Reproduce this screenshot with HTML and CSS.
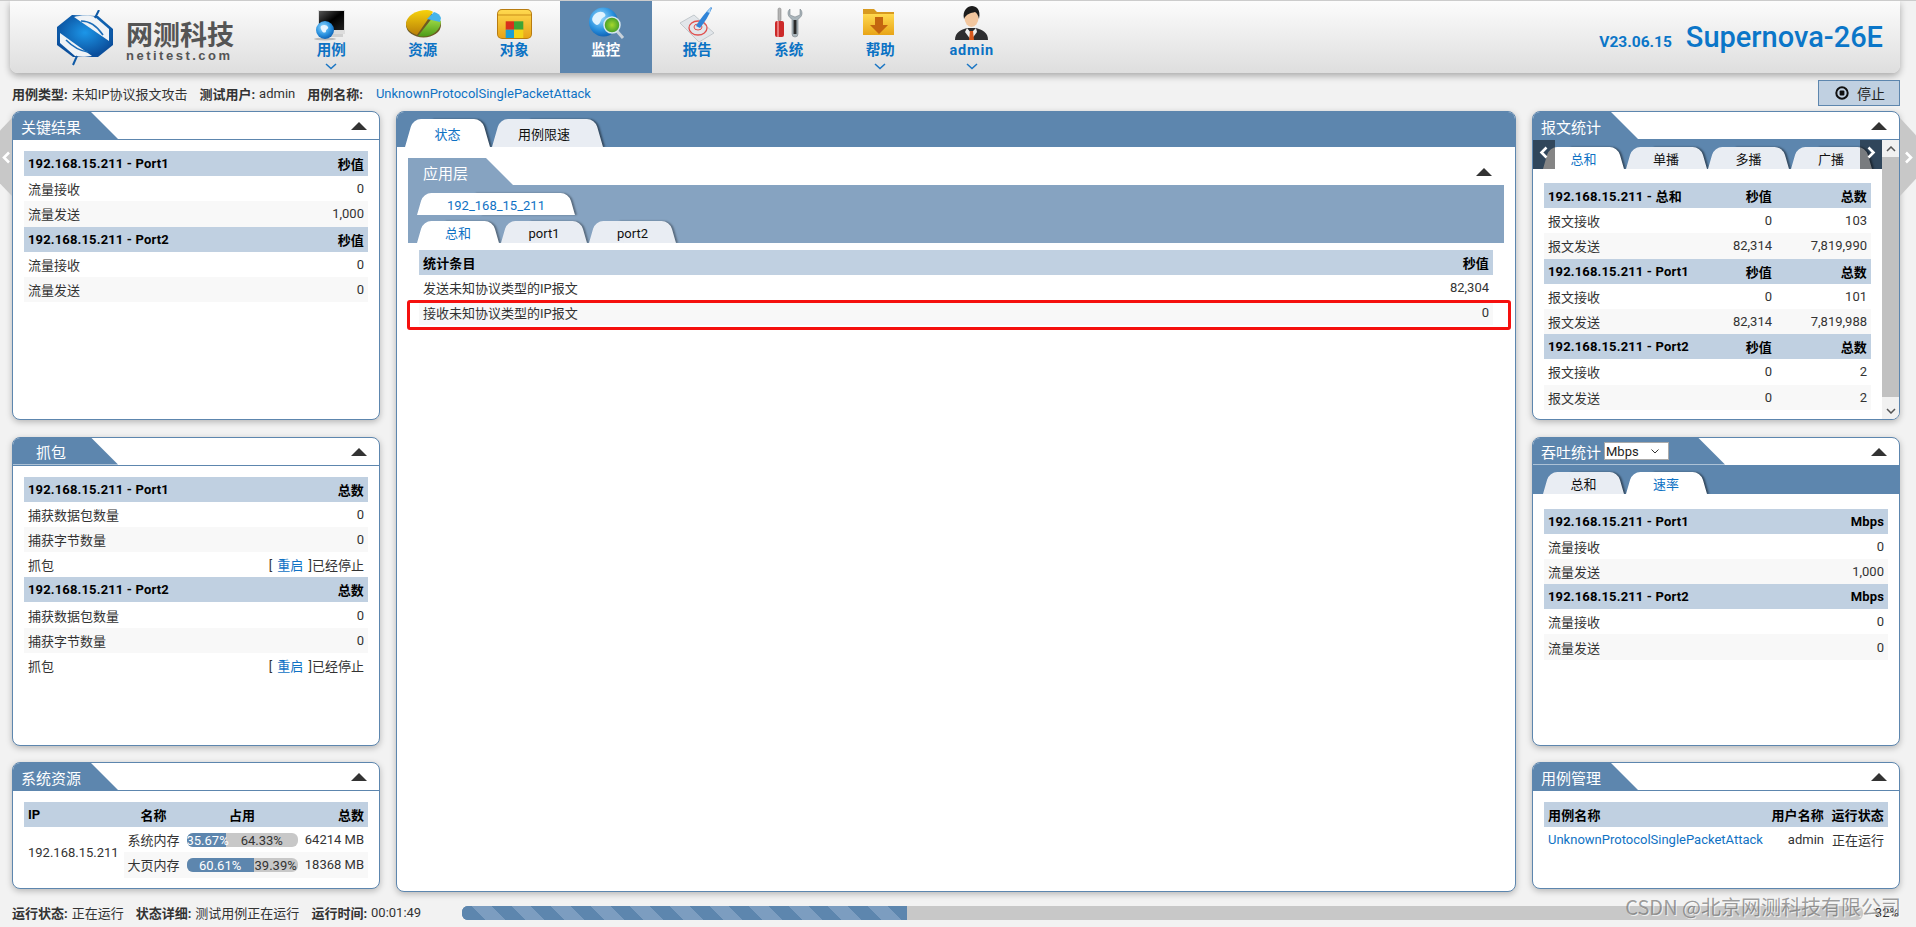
FILE: index.html
```html
<!DOCTYPE html>
<html lang="en">
<head>
  <meta charset="UTF-8">
  <title>Supernova-26E</title>
  <link rel="stylesheet" href="styles.css">
</head>
<body>
  <div class="side-arrow side-left"><svg width="9" height="13" viewBox="0 0 9 13"><path d="M7 1.5 2 6.5l5 5" fill="none" stroke="#fff" stroke-width="2.6"/></svg></div>
  <div class="side-arrow side-right"><svg width="9" height="13" viewBox="0 0 9 13"><path d="M2 1.5l5 5-5 5" fill="none" stroke="#fff" stroke-width="2.6"/></svg></div>

  <header class="topbar">
    <div class="brand">
      <svg class="logo" width="58" height="56" viewBox="0 0 58 56">
        <defs>
          <radialGradient id="logoBlue" cx="0.5" cy="0.42" r="0.55">
            <stop offset="0" stop-color="#1c96e8"/>
            <stop offset="1" stop-color="#0b4f9c"/>
          </radialGradient>
        </defs>
        <path d="M0 17 15 5 41 6 56 19 56 35 41 47 16 47 0 35Z" fill="url(#logoBlue)"/>
        <path d="M17 7C24 5 33 5 38 7L52 19 52 31Z" fill="#f0f3f6"/>
        <path d="M3 23 35 46C28 47 23 47 18 46L3 33Z" fill="#f0f3f6"/>
        <path d="M24 11C32 11 40 16 46 25M9 30C16 37 23 41 31 42" fill="none" stroke="#1c6db8" stroke-width="1.600"/>
        <path d="M38 8 42 0M20 46 16 55" stroke="#0f5aa6" stroke-width="2" fill="none"/>
      </svg>
      <div class="brand-text">
        <div class="brand-cn">网测科技</div>
        <div class="brand-en">netitest.com</div>
      </div>
    </div>
    <nav class="nav">
      <a class="nav-item">
        <svg width="40" height="36" viewBox="0 0 40 36">
          <defs>
            <linearGradient id="screen" x1="0" y1="0" x2="1" y2="1"><stop offset="0" stop-color="#555"/><stop offset="0.5" stop-color="#000"/><stop offset="1" stop-color="#222"/></linearGradient>
            <radialGradient id="globe" cx="0.4" cy="0.35" r="0.7"><stop offset="0" stop-color="#9adcff"/><stop offset="0.6" stop-color="#2b93e0"/><stop offset="1" stop-color="#0b5cb0"/></radialGradient>
          </defs>
          <rect x="7" y="4" width="27" height="24" fill="#ddd"/>
          <rect x="8" y="5" width="25" height="19" fill="url(#screen)"/>
          <rect x="20" y="28" width="12" height="3" fill="#d0d0d0"/>
          <ellipse cx="14" cy="33" rx="11" ry="1.5" fill="#bbb"/>
          <circle cx="14" cy="24" r="9" fill="url(#globe)"/>
          <path d="M10 20c3-2 6-1 7 1s-2 2-2 4-3 2-4 0-2-3-1-5z" fill="#e8f6ff"/>
        </svg>
        <span>用例</span>
        <svg class="chev" width="12" height="7" viewBox="0 0 12 7"><path d="M1 1l5 4.500 5-4.500" fill="none" stroke="#1b76c4" stroke-width="1.500"/></svg>
      </a>
      <a class="nav-item">
        <svg width="40" height="36" viewBox="0 0 40 36">
          <defs>
            <linearGradient id="pieY" x1="0" y1="0" x2="0" y2="1"><stop offset="0" stop-color="#f7d20c"/><stop offset="1" stop-color="#b87f08"/></linearGradient>
            <linearGradient id="pieG" x1="0" y1="0" x2="0" y2="1"><stop offset="0" stop-color="#a8e04a"/><stop offset="1" stop-color="#4c9a18"/></linearGradient>
          </defs>
          <ellipse cx="20.500" cy="19" rx="17.500" ry="12.500" fill="#6d5a22"/>
          <path d="M3 18C3 10 13 4 24 4 27 4 29 5 30 6L14 29C8 27 3 23 3 18Z" fill="url(#pieY)"/>
          <path d="M15 30 30 11 38 15C38 24 28 33 15 30Z" fill="url(#pieG)"/>
          <path d="M24 13 31 6C35 7 37 9 38 12L37 16 24 13Z" fill="#46b4ea"/>
        </svg>
        <span>资源</span>
      </a>
      <a class="nav-item">
        <svg width="40" height="36" viewBox="0 0 40 36">
          <defs><linearGradient id="fold" x1="0" y1="0" x2="0" y2="1"><stop offset="0" stop-color="#ffd94f"/><stop offset="1" stop-color="#e8a417"/></linearGradient></defs>
          <rect x="3" y="3" width="35" height="30" rx="5" fill="#b87c10"/>
          <rect x="4" y="4" width="33" height="28" rx="4" fill="url(#fold)"/>
          <path d="M4 9h33" stroke="#c98d18" stroke-width="1"/>
          <rect x="11.700" y="15.300" width="8.300" height="8.400" fill="#d8301c"/>
          <rect x="20" y="15.300" width="9.300" height="8.400" fill="#3fa436"/>
          <rect x="11.700" y="23.700" width="8.300" height="8.300" fill="#1a9ed6"/>
          <rect x="20" y="23.700" width="9.300" height="8.300" fill="#f2d31a"/>
        </svg>
        <span>对象</span>
      </a>
      <a class="nav-item active">
        <svg width="40" height="36" viewBox="0 0 40 36">
          <defs><radialGradient id="lens" cx="0.5" cy="0.5" r="0.5"><stop offset="0" stop-color="#a7d82c"/><stop offset="1" stop-color="#3f9c2a"/></radialGradient></defs>
          <circle cx="17.500" cy="16" r="14.500" fill="url(#globe)"/>
          <path d="M8 9c4-4 9-4 11-1s-3 3-4 6-3 7-6 4-4-5-1-9z" fill="#dff3ff"/>
          <path d="M30 24l7 8" stroke="#c9d2da" stroke-width="3"/>
          <circle cx="26" cy="19" r="8" fill="url(#lens)" stroke="#d7e6ee" stroke-width="1.500"/>
        </svg>
        <span>监控</span>
      </a>
      <a class="nav-item">
        <svg width="40" height="36" viewBox="0 0 40 36">
          <path d="M3 17 17 9 37 27 22 36Z" fill="#e2e6ea" stroke="#c2c8cc"/>
          <ellipse cx="21" cy="22" rx="9" ry="7" fill="none" stroke="#e0504e" stroke-width="1.300"/>
          <ellipse cx="21" cy="21" rx="4" ry="3" fill="none" stroke="#e0504e"/>
          <path d="M34 1C29 6 23 13 19 20L23 22C28 16 32 9 35 2Z" fill="#2f84d8"/>
          <path d="M34 1 30 6 33 7Z" fill="#a9d3f5"/>
        </svg>
        <span>报告</span>
      </a>
      <a class="nav-item">
        <svg width="40" height="36" viewBox="0 0 40 36">
          <rect x="9" y="2" width="3" height="13" rx="1.500" fill="#b5b5b5" stroke="#777" stroke-width=".5"/>
          <rect x="6" y="15" width="9" height="16" rx="2" fill="#cc2a2a"/>
          <rect x="8" y="15" width="2" height="16" fill="#e87878"/>
          <path d="M20 4c-2 3-1 7 3 9v15a3 3 0 0 0 6 0V13c4-2 5-6 3-9l-1-1v6l-5 2-5-2V3z" fill="#a9b4ba" stroke="#7c878d" stroke-width=".6"/>
          <rect x="24.500" y="14" width="3" height="14" fill="#2a2a2a"/>
        </svg>
        <span>系统</span>
      </a>
      <a class="nav-item">
        <svg width="40" height="36" viewBox="0 0 40 36">
          <path d="M3 3h11l3 3h17v23H3Z" fill="#d89a20"/>
          <path d="M3 8h31v21H3Z" fill="url(#fold)"/>
          <path d="M15 11h8v8h5l-9 9-9-9h5Z" fill="#c4650f"/>
        </svg>
        <span>帮助</span>
        <svg class="chev" width="12" height="7" viewBox="0 0 12 7"><path d="M1 1l5 4.500 5-4.500" fill="none" stroke="#1b76c4" stroke-width="1.500"/></svg>
      </a>
      <a class="nav-item nav-user">
        <svg width="40" height="36" viewBox="0 0 40 36">
          <path d="M3 34c0-8 6-10 12-12h9c6 2 12 4 12 12Z" fill="#2e2e30"/>
          <path d="M15 22l4 5 5-5 1 4-6 8-6-8Z" fill="#f0f0f0"/>
          <path d="M18 25h3l1 9h-5Z" fill="#d8591d"/>
          <ellipse cx="19.500" cy="12" rx="7" ry="9" fill="#f3c79f"/>
          <path d="M12 13C10 4 16 0 20 0s9 3 7 13c-1-4-2-6-4-7-4 1-9 2-11 7Z" fill="#1d1d1d"/>
        </svg>
        <span>admin</span>
        <svg class="chev" width="12" height="7" viewBox="0 0 12 7"><path d="M1 1l5 4.500 5-4.500" fill="none" stroke="#1b76c4" stroke-width="1.500"/></svg>
      </a>
    </nav>
    <div class="product">
      <span class="version">V23.06.15</span>
      <span class="product-name">Supernova-26E</span>
    </div>
  </header>

  <div class="infobar">
    <b>用例类型:</b><span>未知IP协议报文攻击</span>
    <b class="next">测试用户:</b><span>admin</span>
    <b class="next">用例名称:</b><a class="link case-link">UnknownProtocolSinglePacketAttack</a>
    <button class="stop-btn">
      <svg width="14" height="14" viewBox="0 0 14 14"><circle cx="7" cy="7" r="5.700" fill="none" stroke="#111" stroke-width="2"/><rect x="4.600" y="4.600" width="4.800" height="4.800" rx="1" fill="#111"/></svg>
      停止
    </button>
  </div>

  <main class="columns">
    <section class="col">
      <div class="panel tall">
        <div class="panel-head"><div class="panel-title">关键结果</div><i class="collapse"></i></div>
        <div class="panel-body">
          <div class="row head"><span>192.168.15.211 - Port1</span><span>秒值</span></div>
          <div class="row"><span>流量接收</span><span>0</span></div>
          <div class="row alt"><span>流量发送</span><span>1,000</span></div>
          <div class="row head"><span>192.168.15.211 - Port2</span><span>秒值</span></div>
          <div class="row"><span>流量接收</span><span>0</span></div>
          <div class="row alt"><span>流量发送</span><span>0</span></div>
        </div>
      </div>
      <div class="panel tall">
        <div class="panel-head"><div class="panel-title title-short">抓包</div><i class="collapse"></i></div>
        <div class="panel-body">
          <div class="row head"><span>192.168.15.211 - Port1</span><span>总数</span></div>
          <div class="row"><span>捕获数据包数量</span><span>0</span></div>
          <div class="row alt"><span>捕获字节数量</span><span>0</span></div>
          <div class="row"><span>抓包</span><span>[ <a class="link restart">重启</a> ]已经停止</span></div>
          <div class="row head"><span>192.168.15.211 - Port2</span><span>总数</span></div>
          <div class="row"><span>捕获数据包数量</span><span>0</span></div>
          <div class="row alt"><span>捕获字节数量</span><span>0</span></div>
          <div class="row"><span>抓包</span><span>[ <a class="link restart">重启</a> ]已经停止</span></div>
        </div>
      </div>
      <div class="panel short">
        <div class="panel-head"><div class="panel-title">系统资源</div><i class="collapse"></i></div>
        <div class="panel-body">
          <div class="sys-grid">
            <div class="cell th">IP</div>
            <div class="cell th center">名称</div>
            <div class="cell th center">占用</div>
            <div class="cell th right">总数</div>
            <div class="cell ip">192.168.15.211</div>
            <div class="cell center">系统内存</div>
            <div class="cell center">
              <div class="bar"><div class="bar-used" style="width:35.67%">35.67%</div><div class="bar-free">64.33%</div></div>
            </div>
            <div class="cell right">64214 MB</div>
            <div class="cell center alt">大页内存</div>
            <div class="cell center alt">
              <div class="bar"><div class="bar-used" style="width:60.61%">60.61%</div><div class="bar-free">39.39%</div></div>
            </div>
            <div class="cell right alt">18368 MB</div>
          </div>
        </div>
      </div>
    </section>

    <section class="center-panel">
      <div class="tabs tabs-main">
        <a class="tab tab-big active">状态</a>
        <a class="tab tab-big tab-limit">用例限速</a>
      </div>
      <div class="center-body">
        <div class="sub-head"><div class="panel-title sub-title">应用层</div><i class="collapse"></i></div>
        <div class="sub-band">
          <div class="tabs"><a class="tab tab-wide active">192_168_15_211</a></div>
          <div class="tabs">
            <a class="tab active">总和</a>
            <a class="tab">port1</a>
            <a class="tab">port2</a>
          </div>
        </div>
        <div class="sub-table">
          <div class="row head"><span>统计条目</span><span>秒值</span></div>
          <div class="row"><span>发送未知协议类型的IP报文</span><span>82,304</span></div>
          <div class="row alt"><span>接收未知协议类型的IP报文</span><span>0</span></div>
        </div>
      </div>
      <div class="red-mark"></div>
    </section>

    <section class="col">
      <div class="panel tall">
        <div class="panel-head"><div class="panel-title">报文统计</div><i class="collapse"></i></div>
        <div class="scroll-wrap">
          <div class="scroll-main">
            <div class="tabs tabs-panel tabs-scroll">
              <a class="tab tab-tight active">总和</a>
              <a class="tab tab-tight">单播</a>
              <a class="tab tab-tight">多播</a>
              <a class="tab tab-tight">广播</a>
              <span class="tab-nav tab-nav-left"><svg width="10" height="13" viewBox="0 0 10 13"><path d="M7.500 1.500 2.500 6.500l5 5" fill="none" stroke="#fff" stroke-width="2.600"/></svg></span>
              <span class="tab-nav tab-nav-right"><svg width="10" height="13" viewBox="0 0 10 13"><path d="M2.500 1.500l5 5-5 5" fill="none" stroke="#fff" stroke-width="2.600"/></svg></span>
            </div>
            <div class="panel-body">
              <div class="row head three"><span>192.168.15.211 - 总和</span><span>秒值</span><span>总数</span></div>
              <div class="row three"><span>报文接收</span><span>0</span><span>103</span></div>
              <div class="row alt three"><span>报文发送</span><span>82,314</span><span>7,819,990</span></div>
              <div class="row head three"><span>192.168.15.211 - Port1</span><span>秒值</span><span>总数</span></div>
              <div class="row three"><span>报文接收</span><span>0</span><span>101</span></div>
              <div class="row alt three"><span>报文发送</span><span>82,314</span><span>7,819,988</span></div>
              <div class="row head three"><span>192.168.15.211 - Port2</span><span>秒值</span><span>总数</span></div>
              <div class="row three"><span>报文接收</span><span>0</span><span>2</span></div>
              <div class="row alt three"><span>报文发送</span><span>0</span><span>2</span></div>
            </div>
          </div>
          <div class="scrollbar">
            <div class="scroll-btn"><svg width="10" height="6" viewBox="0 0 10 6"><path d="M1 5l4-4 4 4" fill="none" stroke="#555" stroke-width="1.500"/></svg></div>
            <div class="scroll-thumb"></div>
            <div class="scroll-btn"><svg width="10" height="6" viewBox="0 0 10 6"><path d="M1 1l4 4 4-4" fill="none" stroke="#555" stroke-width="1.500"/></svg></div>
          </div>
        </div>
      </div>
      <div class="panel tall">
        <div class="panel-head">
          <div class="panel-title title-select">吞吐统计<select class="unit"><option>Mbps</option></select></div>
          <i class="collapse"></i>
        </div>
        <div class="tabs tabs-panel">
          <a class="tab tab-tight">总和</a>
          <a class="tab tab-tight active">速率</a>
        </div>
        <div class="panel-body">
          <div class="row head"><span>192.168.15.211 - Port1</span><span>Mbps</span></div>
          <div class="row"><span>流量接收</span><span>0</span></div>
          <div class="row alt"><span>流量发送</span><span>1,000</span></div>
          <div class="row head"><span>192.168.15.211 - Port2</span><span>Mbps</span></div>
          <div class="row"><span>流量接收</span><span>0</span></div>
          <div class="row alt"><span>流量发送</span><span>0</span></div>
        </div>
      </div>
      <div class="panel short">
        <div class="panel-head"><div class="panel-title">用例管理</div><i class="collapse"></i></div>
        <div class="panel-body">
          <div class="row head cases"><span>用例名称</span><span>用户名称</span><span>运行状态</span></div>
          <div class="row cases"><span><a class="link">UnknownProtocolSinglePacketAttack</a></span><span>admin</span><span>正在运行</span></div>
        </div>
      </div>
    </section>
  </main>

  <footer class="statusbar">
    <b>运行状态:</b><span>正在运行</span>
    <b class="next">状态详细:</b><span>测试用例正在运行</span>
    <b class="next">运行时间:</b><span>00:01:49</span>
    <div class="progress"><div class="progress-fill" style="width:31.8%"></div></div>
    <span class="percent">32%</span>
  </footer>

  <div class="watermark">CSDN @北京网测科技有限公司</div>
</body>
</html>
```

FILE: styles.css
```css
* {
  box-sizing: border-box;
}

html, body {
  height: 100%;
}

body {
  margin: 0;
  overflow: hidden;
  position: relative;
  border-top: 1px solid #ccc;
  background-color: #f2f2f2;
  color: #333;
  font-family: Roboto, "Noto Sans CJK SC", sans-serif;
  font-size: 13px;
}

a {
  text-decoration: none;
}

.link {
  color: #0f72c4;
}

.restart {
  margin: 0 2px;
}

/* top bar */
.topbar {
  display: flex;
  height: 72px;
  margin: 0 16px 0 10px;
  border-radius: 0 0 8px 8px;
  background: linear-gradient(#fcfcfc, #dedede);
  box-shadow: 0 3px 7px rgba(0, 0, 0, .3);
}

.brand {
  display: flex;
  flex: none;
  width: 275.5px;
  padding: 9px 0 0 47px;
}

.logo {
  flex: none;
}

.brand-text {
  margin: 13.5px 0 0 11px;
}

.brand-cn {
  color: #555;
  font-size: 27px;
  font-weight: 700;
  line-height: 24px;
}

.brand-en {
  margin-top: 1px;
  color: #555;
  font-family: "Liberation Sans", sans-serif;
  font-size: 13px;
  font-weight: 700;
  letter-spacing: 2.5px;
  line-height: 14px;
}

.nav {
  display: flex;
}

.nav-item {
  display: flex;
  flex-direction: column;
  align-items: center;
  width: 91.5px;
  padding-top: 5px;
  color: #0b72c4;
  font-size: 14.5px;
  font-weight: 700;
  line-height: 18px;
}

.nav-item.active {
  background-color: #5d86ae;
  color: #fff;
}

.nav-user span {
  letter-spacing: .8px;
}

.chev {
  margin-top: 3px;
}

.product {
  display: flex;
  align-items: baseline;
  margin-left: auto;
  padding: 19px 17px 0 0;
  color: #0b76c8;
}

.version {
  margin-right: 14px;
  font-size: 15.5px;
  font-weight: 700;
}

.product-name {
  font-size: 29px;
  font-weight: 500;
}

/* info line and status line */
.infobar,
.statusbar {
  display: flex;
  align-items: center;
  padding-left: 12px;
}

.infobar {
  height: 38px;
  padding-top: 2px;
  padding-right: 16px;
}

.infobar span,
.statusbar span {
  margin-left: 4px;
}

.next {
  margin-left: 12px;
}

.case-link {
  margin-left: 13px;
}

.stop-btn {
  display: flex;
  align-items: center;
  gap: 8px;
  width: 82px;
  height: 26px;
  margin-left: auto;
  padding: 0 0 0 16px;
  border: 1px solid #5d86ae;
  background-color: #c0d0e1;
  color: #222;
  font-family: inherit;
  font-size: 14px;
}

/* columns */
.columns {
  display: flex;
  gap: 16px;
  padding-left: 12px;
}

.col {
  display: flex;
  flex-direction: column;
  flex: none;
  gap: 16.5px;
  width: 368px;
}

.panel {
  border: 1px solid #5d86ae;
  border-radius: 8px;
  background-color: #fff;
  box-shadow: 0 2px 6px rgba(0, 0, 0, .25);
  overflow: hidden;
}

.tall {
  height: 309px;
}

.short {
  height: 127px;
}

.panel-head {
  display: flex;
  justify-content: space-between;
  height: 28px;
  border-bottom: 1px solid #5d86ae;
}

.panel-title {
  display: flex;
  align-items: center;
  width: 105px;
  padding: 1px 0 0 8px;
  background-color: #5d86ae;
  clip-path: polygon(0 0, calc(100% - 27px) 0, 100% 100%, 0 100%);
  color: #fff;
  font-size: 15px;
}

.title-short {
  padding-left: 23px;
}

.title-select {
  width: 192px;
  padding-top: 0;
}

.unit {
  width: 65px;
  height: 18px;
  margin-left: 3px;
  padding: 0 0 0 1px;
  border: 1px solid #aaa;
  background: #fff url("data:image/svg+xml,%3Csvg xmlns='http://www.w3.org/2000/svg' width='8' height='5'%3E%3Cpath d='M.5.5l3.500 3.500 3.500-3.500' fill='none' stroke='%23333'/%3E%3C/svg%3E") no-repeat right 9px center;
  color: #222;
  font-family: Roboto, sans-serif;
  font-size: 13px;
  appearance: none;
}

.collapse {
  flex: none;
  width: 0;
  height: 0;
  margin: 10px 12px 0 0;
  border-right: 8px solid transparent;
  border-bottom: 8px solid #333;
  border-left: 8px solid transparent;
}

.panel-body {
  padding: 11px;
}

.tabs-panel + .panel-body {
  padding-top: 15px;
}

.scroll-main .panel-body {
  padding-top: 14px;
}

/* rows */
.row {
  display: flex;
  align-items: center;
  justify-content: space-between;
  height: 25.2px;
  padding: 0 4px;
  white-space: nowrap;
}

.row.head {
  background-color: #c0d0e1;
  color: #000;
  font-weight: 700;
  letter-spacing: .15px;
}

.alt {
  background-color: #f8f8f8;
}

.three span {
  width: 95px;
  text-align: right;
}

.three span:first-child {
  flex: 1;
  text-align: left;
}

.cases span:first-child {
  flex: 1;
}

.cases span:last-child {
  width: 60px;
  text-align: right;
}

/* system resources */
.sys-grid {
  display: grid;
  grid-template-columns: 100px 59px 118px 1fr;
  grid-auto-rows: 25.2px;
}

.cell {
  display: flex;
  align-items: center;
  min-width: 0;
  padding: 0 4px;
  white-space: nowrap;
}

.cell.th {
  background-color: #c0d0e1;
  color: #000;
  font-weight: 700;
}

.center {
  justify-content: center;
}

.right {
  justify-content: flex-end;
}

.ip {
  grid-row: span 2;
}

.bar {
  display: flex;
  flex: none;
  width: 111px;
  height: 14px;
  border-radius: 6px;
  background-color: #c8c8c8;
  line-height: 15px;
  overflow: hidden;
}

.bar-used {
  flex: none;
  background-color: #5d86ae;
  color: #fff;
  text-align: center;
  white-space: nowrap;
}

.bar-free {
  flex: 1;
  text-align: center;
}

/* tabs */
.tabs {
  display: flex;
  gap: 1.5px;
  height: 22px;
}

.tab {
  position: relative;
  z-index: 0;
  display: block;
  flex: none;
  padding: 0 28px;
  color: #111;
  line-height: 26px;
  text-align: center;
}

.tab.active {
  color: #0f72c4;
}

.tab::before,
.tab::after {
  content: "";
  position: absolute;
  z-index: -1;
  top: 0;
  bottom: 0;
  width: 60%;
  background-color: #e9edf3;
}

.tab::before {
  left: 0;
  border-radius: 8px 0 0 0;
  transform: skewX(-16deg);
  transform-origin: bottom left;
}

.tab::after {
  right: 0;
  border-radius: 0 8px 0 0;
  box-shadow: 2px 0 2px rgba(0, 0, 0, .45);
  transform: skewX(16deg);
  transform-origin: bottom right;
}

.tab.active::before,
.tab.active::after {
  background-color: #fff;
}

.tab-wide {
  padding: 0 30px;
}

.tab-tight {
  padding: 0 27.5px;
}

.tab-big {
  padding: 0 29.5px;
  line-height: 31px;
}

.tab-limit {
  padding: 0 33px 0 26px;
}

.tabs-main {
  gap: 2px;
  height: 35px;
  padding: 7px 0 0 8px;
  background-color: #5d86ae;
  overflow: hidden;
}

.tabs-panel {
  height: 28px;
  padding: 6px 0 0 10px;
  background-color: #5d86ae;
  overflow: hidden;
}

.tabs-scroll {
  position: relative;
  height: 29px;
  padding-top: 7px;
}

.tab-nav {
  position: absolute;
  z-index: 2;
  top: 0;
  bottom: 0;
  display: flex;
  align-items: center;
  justify-content: center;
  width: 22px;
  padding-bottom: 4px;
  background-color: rgba(0, 0, 0, .48);
}

.tab-nav-left {
  left: 0;
}

.tab-nav-right {
  right: 0;
}

.scroll-wrap {
  display: flex;
  height: 279px;
}

.scroll-main {
  flex: 1;
  min-width: 0;
}

.scrollbar {
  display: flex;
  flex-direction: column;
  flex: none;
  width: 17px;
  background-color: #f1f1f1;
}

.scroll-btn {
  display: flex;
  flex: none;
  align-items: center;
  justify-content: center;
  height: 17px;
}

.scroll-thumb {
  flex: 1;
  margin-bottom: 5px;
  background-color: #c1c1c1;
}

/* center panel */
.center-panel {
  position: relative;
  flex: none;
  width: 1120px;
  height: 781px;
  border: 1px solid #5d86ae;
  border-radius: 8px;
  background-color: #fff;
  box-shadow: 0 2px 6px rgba(0, 0, 0, .25);
  overflow: hidden;
}

.center-body {
  padding: 11px;
}

.sub-head {
  display: flex;
  justify-content: space-between;
  height: 27px;
}

.sub-title {
  padding: 2px 0 0 15px;
  background-color: #86a3c1;
}

.sub-band {
  display: flex;
  flex-direction: column;
  gap: 6px;
  height: 58px;
  padding: 8px 0 0 9px;
  background-color: #86a3c1;
  overflow: hidden;
}

.sub-band .tab::after {
  box-shadow: 2px 0 2px rgba(0, 0, 0, .35);
}

.sub-table {
  padding: 7px 11px 0;
}

.sub-table .row {
  height: 25px;
  padding-bottom: 1px;
}

.red-mark {
  position: absolute;
  top: 188px;
  left: 10px;
  width: 1104px;
  height: 30px;
  border: 3px solid #f5100e;
  border-radius: 3px;
}

/* status line */
.statusbar {
  height: 41px;
  padding-right: 17px;
}

.progress {
  flex: none;
  width: 1401px;
  height: 14px;
  margin-left: auto;
  border-radius: 6px;
  background-color: #c8c8c8;
  overflow: hidden;
}

.progress-fill {
  height: 100%;
  background-color: #5d86ae;
  background-image: repeating-linear-gradient(-135deg, #5d86ae 0 14px, #7c9dc0 14px 28px);
}

.statusbar .percent {
  margin-left: 12px;
}

.watermark {
  position: absolute;
  top: 891px;
  right: 15px;
  color: rgba(80, 80, 80, .55);
  font-family: "Noto Sans CJK SC", sans-serif;
  font-size: 20px;
  text-shadow: 1px 1px 0 rgba(255, 255, 255, .7);
  white-space: nowrap;
  pointer-events: none;
}

/* arrows behind the side columns */
.side-arrow {
  position: absolute;
  top: 117px;
  display: flex;
  align-items: center;
  justify-content: center;
  height: 78px;
  background-color: #c8c8c8;
}

.side-left {
  left: 0;
  width: 12px;
  clip-path: polygon(100% 0, 100% 100%, 0 84%, 0 16%);
}

.side-right {
  right: 0;
  width: 16px;
  clip-path: polygon(0 0, 100% 22%, 100% 78%, 0 100%);
}
```
